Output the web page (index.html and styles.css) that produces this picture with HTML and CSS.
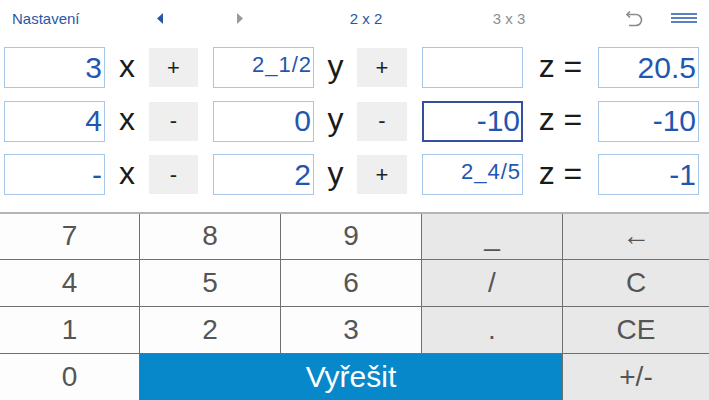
FILE: index.html
```html
<!DOCTYPE html>
<html>
<head>
<meta charset="utf-8">
<link rel="stylesheet" href="styles.css">
</head>
<body>
<div class="app">
  <div class="topbar">
    <div class="tb-cell tb-left"><span class="link">Nastavení</span></div>
    <div class="tb-cell"><svg width="6" height="11" viewBox="0 0 6 11"><polygon points="6,0 0,5.5 6,11" fill="#2a56a8"/></svg></div>
    <div class="tb-cell"><svg width="6" height="11" viewBox="0 0 6 11"><polygon points="0,0 6,5.5 0,11" fill="#9a9a9a"/></svg></div>
    <div class="tb-cell"><span class="link">2 x 2</span></div>
    <div class="tb-cell"><span class="muted">3 x 3</span></div>
    <div class="tb-cell"></div>
    <div class="tb-cell"><svg width="18" height="18" viewBox="0 0 18 18"><path d="M5 2.5 L1.8 5.5 L5 8.5" fill="none" stroke="#8a8a8a" stroke-width="1.6" stroke-linejoin="round"/><path d="M2 5.5 H11 A5.5 5.5 0 0 1 11 16.5 H4" fill="none" stroke="#8a8a8a" stroke-width="1.6"/></svg></div>
    <div class="tb-cell"><svg width="26" height="12" viewBox="0 0 26 12"><rect x="0" y="1" width="26" height="2" fill="#5b7fc2"/><rect x="0" y="5" width="26" height="2" fill="#5b7fc2"/><rect x="0" y="9" width="26" height="2" fill="#5b7fc2"/></svg></div>
  </div>

  <div class="equations">
    <div class="box">3</div><div class="var">x</div><div class="op">+</div><div></div>
    <div class="box small">2_1/2</div><div class="var">y</div><div class="op">+</div><div></div>
    <div class="box"></div><div class="var">z =</div><div class="box">20.5</div>

    <div class="box">4</div><div class="var">x</div><div class="op">-</div><div></div>
    <div class="box">0</div><div class="var">y</div><div class="op">-</div><div></div>
    <div class="box active">-10</div><div class="var">z =</div><div class="box">-10</div>

    <div class="box">-</div><div class="var">x</div><div class="op">-</div><div></div>
    <div class="box">2</div><div class="var">y</div><div class="op">+</div><div></div>
    <div class="box small">2_4/5</div><div class="var">z =</div><div class="box">-1</div>
  </div>

  <div class="keypad">
    <div class="key">7</div><div class="key">8</div><div class="key">9</div><div class="key fn">_</div><div class="key fn">←</div>
    <div class="key">4</div><div class="key">5</div><div class="key">6</div><div class="key fn">/</div><div class="key fn">C</div>
    <div class="key">1</div><div class="key">2</div><div class="key">3</div><div class="key fn">.</div><div class="key fn">CE</div>
    <div class="key">0</div><div class="key solve">Vyřešit</div><div class="key fn">+/-</div>
  </div>
</div>
</body>
</html>
```

FILE: styles.css
```css
html, body {
  margin: 0;
  padding: 0;
  background: #ffffff;
}
body {
  font-family: "Liberation Sans", Arial, sans-serif;
  width: 709px;
  height: 400px;
  overflow: hidden;
}
.app {
  display: flex;
  flex-direction: column;
  height: 400px;
}
.topbar {
  height: 36px;
  display: grid;
  grid-template-columns: 120px 80px 80px 172px 114px 44px 48px 51px;
  align-items: center;
  font-size: 15px;
}
.tb-cell {
  display: flex;
  justify-content: center;
  align-items: center;
  height: 36px;
}
.tb-left {
  justify-content: flex-start;
  padding-left: 12px;
}
.link { color: #2a56a8; }
.muted { color: #8e8e8e; }

.equations {
  display: grid;
  grid-template-columns: 101px 44px 49px 15px 101px 43px 50px 15px 101px 75px 101px;
  grid-auto-rows: 41px;
  row-gap: 12.5px;
  padding: 11px 0 0 4px;
  height: 165px;
}
.box {
  box-sizing: border-box;
  border: 1px solid #a8c6e8;
  color: #1f57b0;
  font-size: 30px;
  display: flex;
  justify-content: flex-end;
  align-items: center;
  padding-right: 2px;
  line-height: 1;
}
.box.small {
  font-size: 22px;
  letter-spacing: 1px;
  align-items: flex-start;
  padding-top: 6px;
  padding-right: 1px;
}
.box.active {
  border: 2px solid #34509c;
  padding-right: 1px;
}
.var {
  font-size: 32px;
  color: #1a1a1a;
  display: flex;
  justify-content: center;
  align-items: center;
  line-height: 1;
  padding-bottom: 4px;
}
.op {
  background: #efefef;
  margin: 1px 0;
  font-size: 22px;
  color: #222;
  display: flex;
  justify-content: center;
  align-items: center;
}

.keypad {
  border-top: 2px solid #b4b4b4;
  height: 187px;
  display: grid;
  grid-template-columns: 139px 140px 140px 140px 1fr;
  grid-template-rows: repeat(4, 1fr);
  gap: 1px;
  background: #707070;
}
.key {
  background: #fdfdfd;
  color: #555555;
  font-size: 28px;
  display: flex;
  justify-content: center;
  align-items: center;
}
.key.fn {
  background: #e8e8e8;
}
.key.solve {
  grid-column: span 3;
  background: #0788cb;
  color: #ffffff;
  font-size: 30px;
}
```
